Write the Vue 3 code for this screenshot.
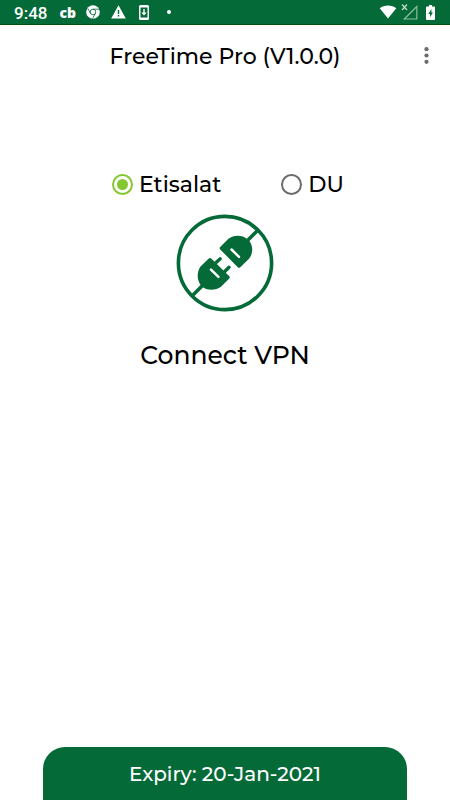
<script setup>
    import { ref } from 'vue'

    const providers = ref([
        { id: 'etisalat', name: 'Etisalat' },
        { id: 'du', name: 'DU' }
    ])
    const provider = ref('etisalat')
    const connected = ref(false)
    const expiry = ref('20-Jan-2021')

    function toggleConnection(){
        connected.value = !connected.value
    }
</script>

<template>
    <div class="app">
        <div class="status-bar">
            <span class="clock">9:48</span>
            <span class="cb">cb</span>
            <svg class="chrome" width="14" height="14" viewBox="0 0 14 14">
                <circle cx="7" cy="7" r="6.8" fill="#fff" />
                <g fill="none" stroke="#046a38" stroke-width="0.8">
                    <circle cx="7" cy="7" r="2.8" />
                    <path d="M7 4.2h6M4.6 8.4L1.8 3.4M9.4 8.4L6.6 13.4" />
                </g>
            </svg>
            <svg class="warning" width="15" height="14" viewBox="0 0 15 14">
                <path d="M7.5 0.2L14.8 13.4H0.2z" fill="#fff" />
                <path d="M7.5 5v4M7.5 10v1.6" stroke="#046a38" stroke-width="1.4" />
            </svg>
            <svg class="update" width="10" height="15" viewBox="0 0 10 15">
                <rect width="10" height="15" rx="1.5" fill="#fff" />
                <rect x="1.5" y="2.5" width="7" height="10" fill="#046a38" />
                <path d="M4.3 4h1.4v3.5h2L5 10.5 2.3 7.5h2z" fill="#fff" />
            </svg>
            <span class="dot"></span>
            <span class="spacer"></span>
            <svg width="18" height="14" viewBox="0 0 18 14">
                <path d="M9 13.5L0.7 3.2C5.5-0.5 12.5-0.5 17.3 3.2z" fill="#fff" />
            </svg>
            <svg class="signal" width="17" height="17" viewBox="0 0 17 17">
                <path d="M15.8 3.5v12.5H3.3z" fill="none" stroke="#8abd9f" stroke-width="1.2" />
                <path d="M1 1.5l5 5.5M6 1.5L1 7" stroke="#c3dccd" stroke-width="1.3" />
            </svg>
            <svg width="9" height="15" viewBox="0 0 9 15">
                <path d="M3 0h3v1.5h2q1 0 1 1V14q0 1-1 1H1q-1 0-1-1V2.5q0-1 1-1h2z" fill="#fff" />
                <path d="M5.4 4L2.3 8.9h1.8v3.3L6.9 7.6h-1.5z" fill="#046a38" />
            </svg>
        </div>

        <header class="toolbar">
            <h1>FreeTime Pro (V1.0.0)</h1>
            <button class="menu" type="button" aria-label="More options">
                <svg width="6" height="18" viewBox="0 0 6 18" fill="#6b6b6b">
                    <circle cx="3.5" cy="2.2" r="2.1" />
                    <circle cx="3.5" cy="8.5" r="2.1" />
                    <circle cx="3.5" cy="14.8" r="2.1" />
                </svg>
            </button>
        </header>

        <main>
            <div class="providers">
                <label v-for="item in providers" :key="item.id" :for="item.id">
                    <input type="radio" :id="item.id" name="provider" :value="item.id" v-model="provider">
                    {{ item.name }}
                </label>
            </div>

            <button class="connect" type="button" :aria-pressed="connected" @click="toggleConnection()">
                <svg width="98" height="98" viewBox="0 0 98 98">
                    <g fill="none" stroke="#046a38">
                        <circle cx="49" cy="49" r="46.6" stroke-width="3.6" />
                        <path d="M71 27L82 16M27 71L16 82" stroke-width="3.6" />
                        <path d="M38.5 50L44.2 44.8M47.5 58.8L53 53.2" stroke-width="3.4" stroke-linecap="round" />
                    </g>
                    <g fill="#046a38">
                        <path d="M44.2 33L52.5 24.8C58.5 20 67.5 21 72.4 26C77.3 31 77.5 39 73 44.8L64.3 53.2Q63 54.4 61.8 53.2L44.2 35.4Q43 34.2 44.2 33z" />
                        <path d="M32.8 44.5Q34 43.3 35.2 44.5L53.3 62.2Q54.5 63.4 53.3 64.6L45 72.8C39.5 77 30.5 77 25.6 72C20.8 67 20.5 58.5 24.5 52.6z" />
                    </g>
                    <path d="M55.5 35.5L63 42.8M35 55.7L42.4 62.8" fill="none" stroke="#fff" stroke-width="2.5" stroke-linecap="round" />
                </svg>
                <span>Connect VPN</span>
            </button>
        </main>

        <footer>Expiry: {{ expiry }}</footer>
    </div>
</template>

<style>
body {
    margin: 0;
    background-color: #fff;
}
</style>

<style scoped>
.app {
    display: flex;
    flex-direction: column;
    min-height: 100vh;
    color: #000;
    font-family: 'Montserrat', 'Inter', sans-serif;
    font-weight: 500;
}

/* Status bar */
.status-bar {
    display: flex;
    align-items: center;
    box-sizing: border-box;
    height: 25px;
    padding: 0 15px 0 14px;
    background-color: #046a38;
    border-bottom: 1px solid #00520a;
    color: #fff;
}

.clock {
    margin-right: 12px;
    padding-top: 1px;
    font: 500 17px 'Roboto', sans-serif;
}

.cb {
    margin-right: 10px;
    font: 800 14px 'Open Sans', sans-serif;
}

.chrome {
    margin-right: 11px;
}

.warning {
    margin-right: 13px;
}

.update {
    margin-right: 18px;
}

.dot {
    width: 4px;
    height: 4px;
    border-radius: 50%;
    background-color: #fff;
}

.spacer {
    flex: 1;
}

.signal {
    margin: 0 8px 2px 4px;
}

/* Toolbar */
.toolbar {
    display: grid;
    grid-template-columns: 48px 1fr 48px;
    align-items: center;
    height: 62px;
}

h1 {
    grid-column: 2;
    margin: 0;
    font-size: 22px;
    font-weight: 500;
    line-height: 29px;
    text-align: center;
}

.menu {
    display: flex;
    justify-content: center;
    padding: 8px;
    border: none;
    background: none;
    cursor: pointer;
}

/* Provider choice and connect button */
main {
    display: flex;
    flex: 1;
    flex-direction: column;
    align-items: center;
    padding-top: 83px;
}

.providers {
    display: flex;
    gap: 60px;
    padding-left: 6px;
}

label {
    display: flex;
    align-items: center;
    gap: 6px;
    font-size: 22px;
    line-height: 29px;
    cursor: pointer;
}

input {
    box-sizing: border-box;
    width: 21px;
    height: 21px;
    margin: 0;
    border: 2px solid #6b6b6b;
    border-radius: 50%;
    appearance: none;
    cursor: pointer;
}

input:checked {
    padding: 3px;
    border-color: #84c72f;
    background-color: #84c72f;
    background-clip: content-box;
}

.connect {
    display: flex;
    flex-direction: column;
    align-items: center;
    gap: 27px;
    margin-top: 15px;
    padding: 0;
    border: none;
    background: none;
    color: inherit;
    font: inherit;
    font-size: 25px;
    line-height: 32px;
    cursor: pointer;
}

/* Expiry banner */
footer {
    margin: 0 43px;
    padding: 13px 0 12px;
    border-radius: 22px 22px 0 0;
    background-color: #046a38;
    color: #fff;
    font-size: 20px;
    line-height: 28px;
    text-align: center;
}
</style>
